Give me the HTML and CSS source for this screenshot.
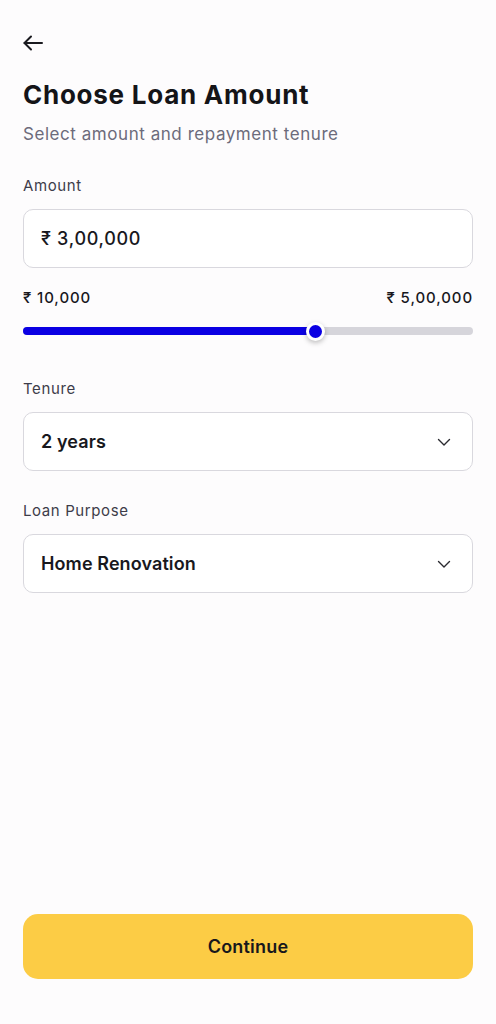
FILE: index.html
```html
<!DOCTYPE html>
<html lang="en">
<head>
<meta charset="utf-8">
<title>Choose Loan Amount</title>
<link rel="stylesheet" href="styles.css">
</head>
<body>
<main class="screen">
  <button class="back" aria-label="Back">
    <svg width="24" height="24" viewBox="0 0 24 24" fill="none" stroke="#1a1a1f" stroke-width="2" stroke-linecap="round" stroke-linejoin="round"><path d="M21 12H3.5"/><path d="M10 5.5L3.5 12L10 18.5"/></svg>
  </button>
  <h1 class="title">Choose Loan Amount</h1>
  <p class="subtitle">Select amount and repayment tenure</p>

  <label class="label label-amount">Amount</label>
  <div class="field amount-field">₹ 3,00,000</div>

  <div class="range-row">
    <span>₹ 10,000</span>
    <span>₹ 5,00,000</span>
  </div>
  <div class="slider">
    <div class="track">
      <div class="fill" style="width: 65.1%"></div>
      <div class="thumb" style="left: 65.1%"></div>
    </div>
  </div>

  <label class="label label-tenure">Tenure</label>
  <div class="field select">
    <span>2 years</span>
    <svg class="chev" width="16" height="16" viewBox="0 0 16 16" fill="none" stroke="#2a2a30" stroke-width="1.4" stroke-linecap="round" stroke-linejoin="round"><path d="M2.5 5.5l5.5 5.5 5.5-5.5"/></svg>
  </div>

  <label class="label label-purpose">Loan Purpose</label>
  <div class="field select">
    <span>Home Renovation</span>
    <svg class="chev" width="16" height="16" viewBox="0 0 16 16" fill="none" stroke="#2a2a30" stroke-width="1.4" stroke-linecap="round" stroke-linejoin="round"><path d="M2.5 5.5l5.5 5.5 5.5-5.5"/></svg>
  </div>

  <div class="spacer"></div>
  <button class="continue">Continue</button>
</main>
</body>
</html>
```

FILE: styles.css
```css
* { box-sizing: border-box; }
html, body { margin: 0; padding: 0; }
body {
  background: #fdfcfd;
  font-family: Inter, "Noto Sans", "Liberation Sans", sans-serif;
  color: #17171c;
}
.screen {
  min-height: 1024px;
  display: flex;
  flex-direction: column;
  padding: 31px 23px 45px;
}
.back {
  width: 24px;
  height: 24px;
  padding: 0;
  margin-left: -2px;
  border: 0;
  background: none;
  display: flex;
}
.title {
  margin: 24px 0 0;
  font-size: 26px;
  line-height: 32px;
  font-weight: 700;
  letter-spacing: 0.75px;
  color: #141418;
}
.subtitle {
  margin: 11px 0 0;
  font-size: 17px;
  line-height: 24px;
  letter-spacing: 0.55px;
  color: #6c6b7b;
}
.label {
  display: block;
  font-size: 15px;
  line-height: 20px;
  letter-spacing: 0.6px;
  color: #3d3c4a;
}
.label-amount { margin-top: 30px; }
.label-tenure { margin-top: 38px; }
.label-purpose { margin-top: 30px; }
.field {
  margin-top: 13px;
  height: 59px;
  border: 1px solid #d9d8de;
  border-radius: 10px;
  background: #fff;
  padding: 0 17px;
  display: flex;
  align-items: center;
  font-size: 18px;
  font-weight: 500;
  letter-spacing: 0.7px;
  color: #18181d;
}
.select {
  justify-content: space-between;
  font-weight: 600;
  letter-spacing: 0.1px;
}
.chev { margin-right: 3px; }
.range-row {
  margin-top: 20px;
  display: flex;
  justify-content: space-between;
  font-size: 15px;
  line-height: 20px;
  font-weight: 500;
  letter-spacing: 0.9px;
  color: #18181d;
}
.slider {
  margin-top: 13px;
  height: 20px;
  display: flex;
  align-items: center;
}
.track {
  position: relative;
  width: 100%;
  height: 8px;
  border-radius: 4px;
  background: #d6d5db;
}
.fill {
  height: 100%;
  border-radius: 4px;
  background: #0b00e3;
}
.thumb {
  position: absolute;
  top: 50%;
  width: 19px;
  height: 19px;
  margin: -9.5px 0 0 -9.5px;
  border-radius: 50%;
  background: #0b00e3;
  border: 3px solid #fff;
  box-shadow: 0 2px 5px rgba(0, 0, 0, 0.25);
}
.spacer { flex: 1; }
.continue {
  height: 65px;
  border: 0;
  border-radius: 15px;
  background: #fccc45;
  font-family: inherit;
  font-size: 18px;
  font-weight: 600;
  letter-spacing: 0.2px;
  color: #17171c;
}
```
